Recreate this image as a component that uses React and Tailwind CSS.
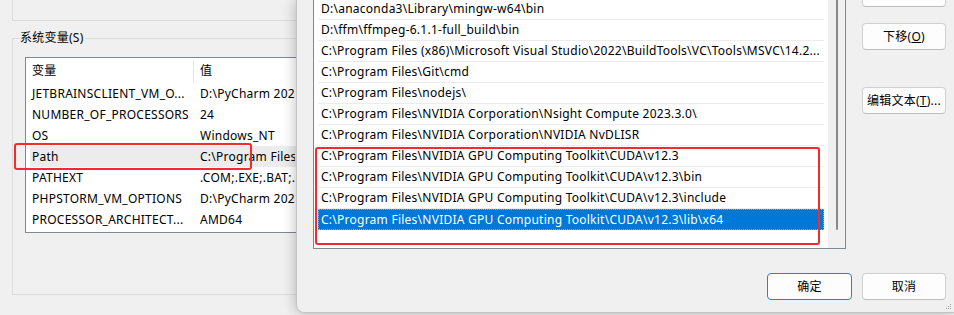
import React from 'react';

// values are only partly visible: the edit window covers the rest
const sysVars = [
    ['JETBRAINSCLIENT_VM_O...', 'D:\\PyCharm 2024'],
    ['NUMBER_OF_PROCESSORS', '24'],
    ['OS', 'Windows_NT'],
    ['Path', 'C:\\Program Files'],
    ['PATHEXT', '.COM;.EXE;.BAT;.C'],
    ['PHPSTORM_VM_OPTIONS', 'D:\\PyCharm 2024'],
    ['PROCESSOR_ARCHITECT...', 'AMD64'],
];

const paths = [
    'D:\\anaconda3\\Library\\mingw-w64\\bin',
    'D:\\ffm\\ffmpeg-6.1.1-full_build\\bin',
    'C:\\Program Files (x86)\\Microsoft Visual Studio\\2022\\BuildTools\\VC\\Tools\\MSVC\\14.2...',
    'C:\\Program Files\\Git\\cmd',
    'C:\\Program Files\\nodejs\\',
    'C:\\Program Files\\NVIDIA Corporation\\Nsight Compute 2023.3.0\\',
    'C:\\Program Files\\NVIDIA Corporation\\NVIDIA NvDLISR',
    'C:\\Program Files\\NVIDIA GPU Computing Toolkit\\CUDA\\v12.3',
    'C:\\Program Files\\NVIDIA GPU Computing Toolkit\\CUDA\\v12.3\\bin',
    'C:\\Program Files\\NVIDIA GPU Computing Toolkit\\CUDA\\v12.3\\include',
    'C:\\Program Files\\NVIDIA GPU Computing Toolkit\\CUDA\\v12.3\\lib\\x64',
];

const WinButton = ({ children, primary, className = '' }) => (
    <div
        className={`h-[27px] flex items-center justify-center rounded-[4px] border bg-[#fdfdfd] ${primary ? 'border-[#2f7fd0]' : 'border-[#d0d0d0] border-b-[#bdbdbd]'} ${className}`}
    >
        {children}
    </div>
);

const App = () => {
    return (
        <div className="relative w-[954px] h-[315px] overflow-hidden bg-[#f0f0f0] text-[12px] leading-[16px] tracking-[0.25px] text-black font-['Noto_Sans','Noto_Sans_CJK_SC',sans-serif]">
            {/* back window: environment variables */}
            <div className="pl-[12px]">
                <div className="w-[600px] h-[21px] border-l border-b border-[#dcdcdc]"></div>
                <fieldset className="mt-[9px] w-[600px] h-[265px] border border-[#dcdcdc] p-0 m-0">
                    <legend className="ml-[6px] px-[1px] leading-[16px]">系统变量(S)</legend>
                    <div className="ml-[12px] mt-[11px] w-[520px] h-[176px] border border-[#828790] bg-white px-[4px]">
                        <div className="h-[25px] flex">
                            <div className="w-[163px] shrink-0 pl-[2px] flex items-center">变量</div>
                            <div className="w-px h-[22px] mt-[2px] bg-[#e5e5e5]"></div>
                            <div className="pl-[6px] flex items-center">值</div>
                        </div>
                        {sysVars.map(([name, value]) => (
                            <div key={name} className={`h-[21px] flex items-center whitespace-nowrap ${name === 'Path' ? 'bg-[#ececec]' : ''}`}>
                                <div className="w-[163px] shrink-0 pl-[2px] overflow-hidden">{name}</div>
                                <div className="ml-[7px] w-[95px] shrink-0 overflow-hidden">{value}</div>
                            </div>
                        ))}
                    </div>
                </fieldset>
            </div>

            {/* front window: edit Path */}
            <div className="absolute left-[296px] top-0 right-0 h-[313px] bg-[#f0f0f0] rounded-bl-[8px] border-l border-b border-[#c4c4c4] shadow-[0_0_14px_rgba(0,0,0,0.28)] flex flex-col">
                <div className="flex">
                    <div className="ml-[16px] w-[533px] h-[249px] border-x border-b border-[#828790] bg-white flex">
                        <div className="flex-1 px-[4px] overflow-hidden">
                            <div className="mt-[-1px]">
                                {paths.map((p, i) => {
                                    const selected = i === paths.length - 1;
                                    return (
                                        <div
                                            key={p}
                                            className={`h-[21px] flex items-center whitespace-nowrap ${selected ? 'bg-[#0078d7] text-white border border-dotted border-[#e8a050] pl-[2px]' : 'border-b border-[#ececec] pl-[3px]'}`}
                                        >
                                            {p}
                                        </div>
                                    );
                                })}
                            </div>
                        </div>
                        <div className="w-[17px] bg-[#f0f0f0] flex justify-center">
                            <div className="w-[2px] h-[230px] rounded-b-full bg-[#8a8a8a]"></div>
                        </div>
                    </div>
                    <div className="ml-[16px] w-[84px] flex flex-col">
                        <WinButton className="mt-[-20px]"></WinButton>
                        <WinButton className="mt-[16px]">
                            <span>下移(<span className="underline">O</span>)</span>
                        </WinButton>
                        <WinButton className="mt-[37px]">
                            <span>编辑文本(<span className="underline">T</span>)...</span>
                        </WinButton>
                    </div>
                </div>
                <div className="mt-[24px] flex justify-end gap-[10px] pr-[8px]">
                    <WinButton primary className="w-[85px]">确定</WinButton>
                    <WinButton className="w-[84px]">取消</WinButton>
                </div>
                <svg className="absolute right-[2px] bottom-[2px]" width="8" height="8" viewBox="0 0 8 8">
                    <rect x="6" y="2" width="1" height="1" fill="#a0a0a0" />
                    <rect x="4" y="4" width="1" height="1" fill="#a0a0a0" />
                    <rect x="6" y="4" width="1" height="1" fill="#a0a0a0" />
                    <rect x="2" y="6" width="1" height="1" fill="#a0a0a0" />
                    <rect x="4" y="6" width="1" height="1" fill="#a0a0a0" />
                    <rect x="6" y="6" width="1" height="1" fill="#a0a0a0" />
                </svg>
            </div>

            {/* red annotation boxes */}
            <div className="absolute left-[14px] top-[143px] w-[238px] h-[27px] border-2 border-[#f52a2a] rounded-[3px]"></div>
            <div className="absolute left-[315px] top-[147px] w-[505px] h-[98px] border-2 border-[#f52a2a] rounded-[3px]"></div>
        </div>
    );
};

export default App;
